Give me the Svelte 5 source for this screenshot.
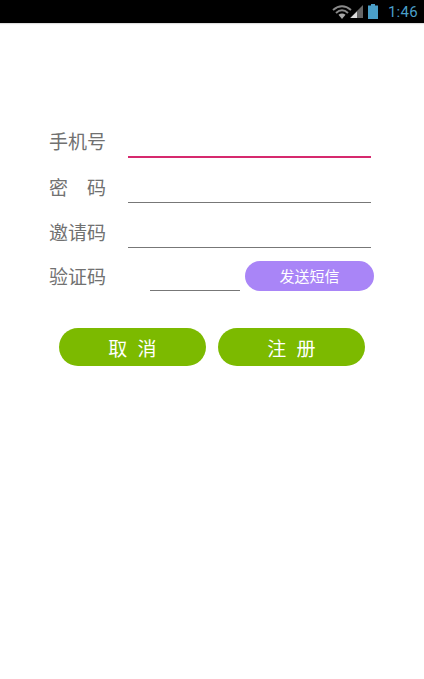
<script>
  const rows = [
    { label: '手机号', focused: true },
    { label: '密　码', focused: false },
    { label: '邀请码', focused: false }
  ];
</script>

<div class="status">
  <svg class="wifi" viewBox="0 0 20 14" width="20" height="14">
    <path d="M1 5 Q10 -2.5 19 5" fill="none" stroke="#8a8a8a" stroke-width="2" />
    <path d="M4 8 Q10 2.5 16 8" fill="none" stroke="#8a8a8a" stroke-width="2" />
    <path d="M6.5 9.8 Q10 7 13.5 9.8 L10 14 Z" fill="#a8a8a8" />
  </svg>
  <svg class="signal" viewBox="0 0 13 13" width="13" height="13">
    <path d="M13 0 V13 H0 Z" fill="#666" />
    <path d="M7 6.5 V13 H0.5 Z" fill="#ddd" />
  </svg>
  <svg class="battery" viewBox="0 0 10 15" width="10" height="15">
    <path d="M3 0 H7 V1.5 H10 V15 H0 V1.5 H3 Z" fill="#4a9fc8" />
  </svg>
  <span class="time">1:46</span>
</div>

<main>
  {#each rows as row}
    <div class="row">
      <span class="label" class:first={row.focused}>{row.label}</span>
      <div class="input" class:focused={row.focused}></div>
    </div>
  {/each}

  <div class="row code">
    <span class="label">验证码</span>
    <div class="input short"></div>
    <button class="sms">发送短信</button>
  </div>

  <div class="actions">
    <button class="action">取 消</button>
    <button class="action">注 册</button>
  </div>
</main>

<style>
  :global(body) {
    margin: 0;
    background: #fff;
    font-family: "Noto Sans CJK SC", "Liberation Sans", sans-serif;
  }

  .status {
    height: 23px;
    background: #000;
    display: flex;
    align-items: center;
    justify-content: flex-end;
    padding-right: 6px;
    box-shadow: 0 1px 1px #ddd;
  }

  .wifi { margin-right: -2px; }
  .signal { margin-right: 5px; }
  .battery { margin-right: 10px; }

  .time {
    color: #4a9fc8;
    font-family: Roboto, sans-serif;
    font-size: 15px;
    letter-spacing: 0.3px;
  }

  main {
    padding: 90px 0 0 49px;
    width: 331px;
  }

  .row {
    display: flex;
    align-items: flex-end;
    height: 45px;
  }

  .label {
    width: 79px;
    flex: none;
    color: #717171;
    font-size: 19px;
    line-height: 26px;
    margin-bottom: 3px;
  }

  .label.first {
    margin-bottom: 4px;
  }

  .input {
    width: 243px;
    height: 1px;
    background: #777;
  }

  .input.focused {
    height: 2px;
    background: #d6296e;
  }

  .code {
    height: 43px;
    position: relative;
  }

  .code .label {
    margin-bottom: 2px;
  }

  .input.short {
    width: 90px;
    margin-left: 22px;
  }

  .sms {
    width: 129px;
    height: 30px;
    margin-left: 5px;
    border: 0;
    border-radius: 15px;
    background: #a985f7;
    color: #fff;
    font: inherit;
    font-size: 15px;
    padding: 0 0 2px;
  }

  .actions {
    display: flex;
    gap: 12px;
    margin: 37px 0 0 10px;
  }

  .action {
    width: 147px;
    height: 38px;
    border: 0;
    border-radius: 19px;
    background: #7cba00;
    color: #fff;
    font: inherit;
    font-size: 19px;
    letter-spacing: 3px;
    padding: 0 0 0 3px;
  }
</style>
